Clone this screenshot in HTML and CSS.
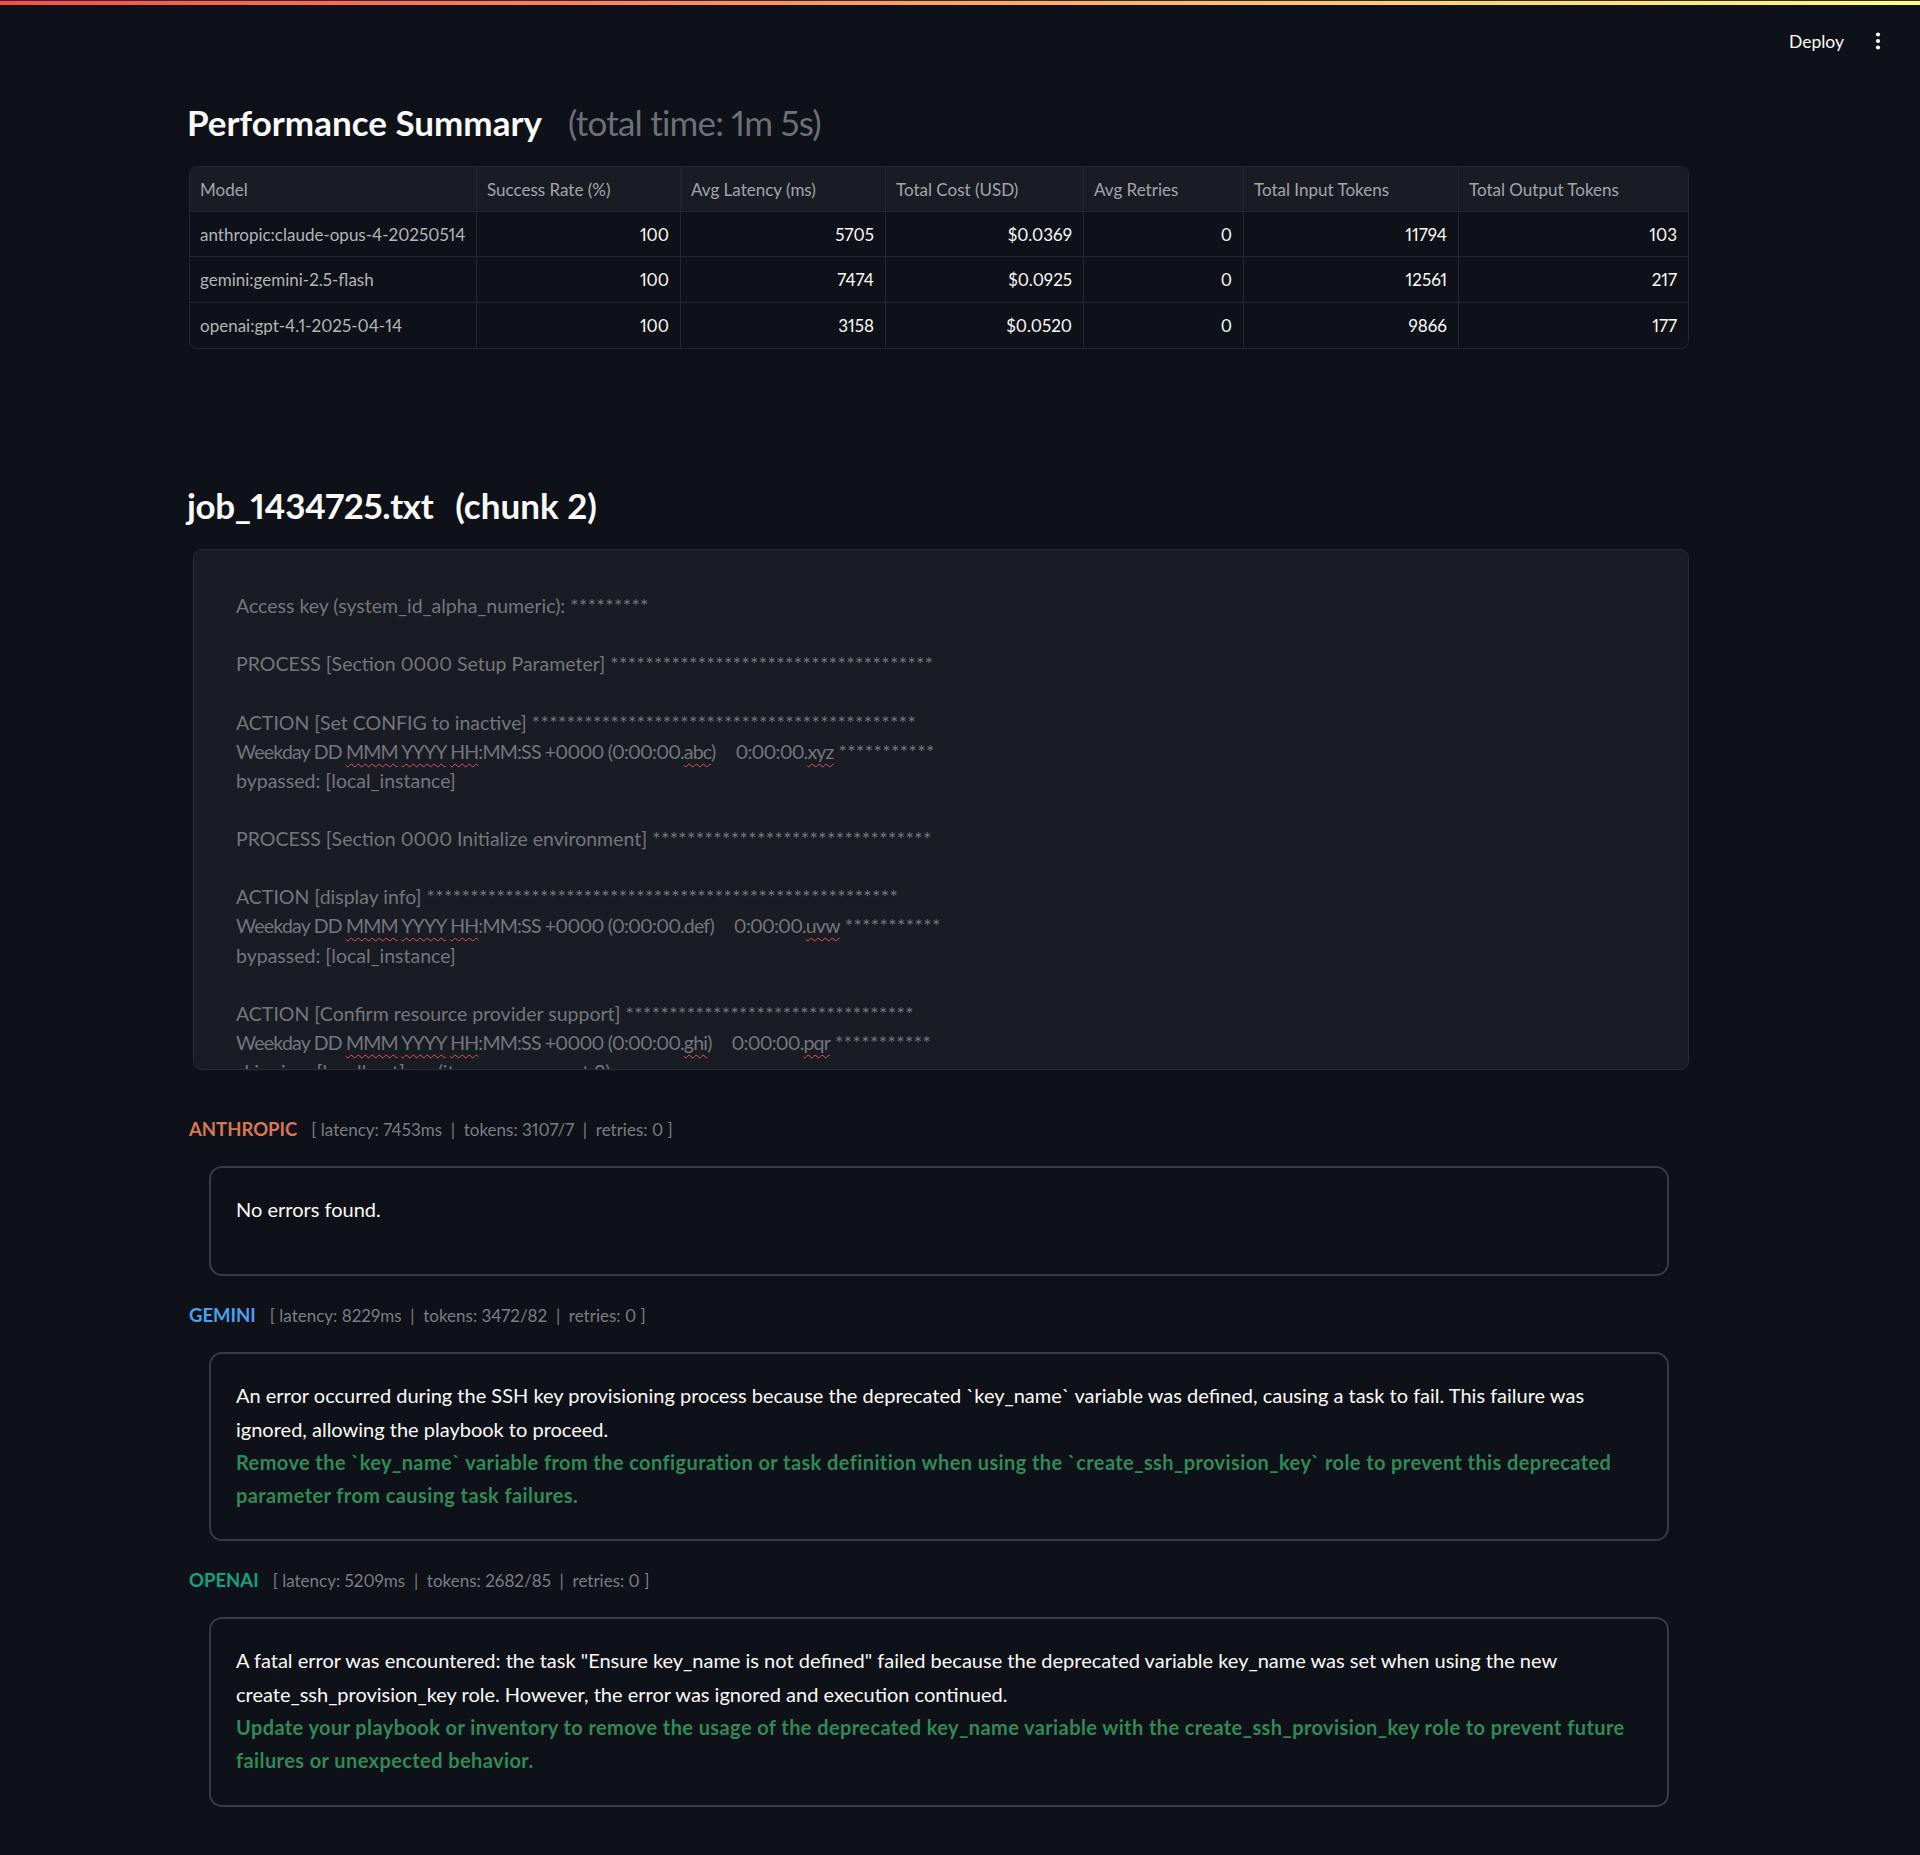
FILE: index.html
```html
<!DOCTYPE html>
<html lang="en">
<head>
<meta charset="utf-8">
<title>Performance Summary</title>
<link rel="stylesheet" href="styles.css">
</head>
<body>
<div class="deco"></div>
<header class="topbar">
  <span class="deploy">Deploy</span>
  <span class="menu"><svg width="6" height="20" viewBox="0 0 6 20"><circle cx="3" cy="3.5" r="2.1"/><circle cx="3" cy="10" r="2.1"/><circle cx="3" cy="16.5" r="2.1"/></svg></span>
</header>
<main class="main">
  <h3 class="title">Performance Summary<span class="muted">(total time: 1m 5s)</span></h3>

  <div class="grid">
    <div class="cell head">Model</div>
    <div class="cell head">Success Rate (%)</div>
    <div class="cell head">Avg Latency (ms)</div>
    <div class="cell head">Total Cost (USD)</div>
    <div class="cell head">Avg Retries</div>
    <div class="cell head">Total Input Tokens</div>
    <div class="cell head">Total Output Tokens</div>

    <div class="cell idx">anthropic:claude-opus-4-20250514</div>
    <div class="cell num">100</div>
    <div class="cell num">5705</div>
    <div class="cell num">$0.0369</div>
    <div class="cell num">0</div>
    <div class="cell num">11794</div>
    <div class="cell num">103</div>

    <div class="cell idx">gemini:gemini-2.5-flash</div>
    <div class="cell num">100</div>
    <div class="cell num">7474</div>
    <div class="cell num">$0.0925</div>
    <div class="cell num">0</div>
    <div class="cell num">12561</div>
    <div class="cell num">217</div>

    <div class="cell idx last">openai:gpt-4.1-2025-04-14</div>
    <div class="cell num last">100</div>
    <div class="cell num last">3158</div>
    <div class="cell num last">$0.0520</div>
    <div class="cell num last">0</div>
    <div class="cell num last">9866</div>
    <div class="cell num last">177</div>
  </div>

  <h3 class="title job"><span class="fname">job_1434725.txt</span><span class="chunk">(chunk 2)</span></h3>

  <div class="textbox">Access key (system_id_alpha_numeric): <span class="st">*********</span>

PROCESS [Section 0000 Setup Parameter] <span class="st">*************************************</span>

ACTION [Set CONFIG to inactive] <span class="st">********************************************</span>
<span class="dt">Weekday DD <span class="sp">MMM</span> <span class="sp">YYYY</span> <span class="sp">HH</span>:MM:SS +0000 (0:00:00.<span class="sp">abc</span>)</span>    <span class="dt">0:00:00.<span class="sp">xyz</span></span> <span class="st">***********</span>
bypassed: [local_instance]

PROCESS [Section 0000 Initialize environment] <span class="st">********************************</span>

ACTION [display info] <span class="st">******************************************************</span>
<span class="dt">Weekday DD <span class="sp">MMM</span> <span class="sp">YYYY</span> <span class="sp">HH</span>:MM:SS +0000 (0:00:00.def)</span>    <span class="dt">0:00:00.<span class="sp">uvw</span></span> <span class="st">***********</span>
bypassed: [local_instance]

ACTION [Confirm resource provider support] <span class="st">*********************************</span>
<span class="dt">Weekday DD <span class="sp">MMM</span> <span class="sp">YYYY</span> <span class="sp">HH</span>:MM:SS +0000 (0:00:00.<span class="sp">ghi</span>)</span>    <span class="dt">0:00:00.<span class="sp">pqr</span></span> <span class="st">***********</span>
skipping: [localhost] =&gt; (item=component 2)
bypassed: [local_instance]</div>

  <div class="model-head"><span class="model anthropic">ANTHROPIC</span><span class="meta">[ latency: 7453ms &nbsp;|&nbsp; tokens: 3107/7 &nbsp;|&nbsp; retries: 0 ]</span></div>
  <div class="card card-empty">
    <p>No errors found.</p>
  </div>

  <div class="model-head"><span class="model gemini">GEMINI</span><span class="meta">[ latency: 8229ms &nbsp;|&nbsp; tokens: 3472/82 &nbsp;|&nbsp; retries: 0 ]</span></div>
  <div class="card">
    <p>An error occurred during the SSH key provisioning process because the deprecated `key_name` variable was defined, causing a task to fail. This failure was<br>ignored, allowing the playbook to proceed.<br><strong class="fix">Remove the `key_name` variable from the configuration or task definition when using the `create_ssh_provision_key` role to prevent this deprecated<br>parameter from causing task failures.</strong></p>
  </div>

  <div class="model-head"><span class="model openai">OPENAI</span><span class="meta">[ latency: 5209ms &nbsp;|&nbsp; tokens: 2682/85 &nbsp;|&nbsp; retries: 0 ]</span></div>
  <div class="card">
    <p>A fatal error was encountered: the task "Ensure key_name is not defined" failed because the deprecated variable key_name was set when using the new<br>create_ssh_provision_key role. However, the error was ignored and execution continued.<br><strong class="fix">Update your playbook or inventory to remove the usage of the deprecated key_name variable with the create_ssh_provision_key role to prevent future<br>failures or unexpected behavior.</strong></p>
  </div>
</main>
</body>
</html>
```

FILE: styles.css
```css
html, body {
  margin: 0;
  padding: 0;
}

body {
  background: #0e1117;
  color: #fafafa;
  font-family: Lato, "Noto Sans", "DejaVu Sans", sans-serif;
  font-variant-numeric: proportional-nums;
  min-height: 1855px;
}

.deco {
  height: 4px;
  border-top: 1px solid #2c2e35;
  background: linear-gradient(90deg, #ff4b4b, #fffd80);
}

.topbar {
  height: 72px;
  display: flex;
  justify-content: flex-end;
  align-items: center;
  gap: 31px;
  padding-right: 39px;
}

.deploy {
  font-size: 17.5px;
  color: #fafafa;
}

.menu {
  display: flex;
  align-items: center;
}

.menu svg {
  fill: #fafafa;
}

.main {
  margin-left: 189px;
  width: 1500px;
}

.title {
  margin: 23px 0 0 -2px;
  font-size: 35px;
  line-height: 44px;
  font-weight: 700;
  color: #fafafa;
  white-space: nowrap;
}

.title .muted {
  margin-left: 26px;
  color: #6c6f77;
  font-weight: 400;
  letter-spacing: -0.8px;
}

.title .fname {
  letter-spacing: -0.4px;
}

.title .chunk {
  margin-left: 22px;
}

.job {
  margin-top: 134px;
}

/* data grid */
.grid {
  margin-top: 22px;
  display: grid;
  grid-template-columns: 286px 204px 205px 198px 160px 215px 230px;
  grid-template-rows: 45px 45px 46px 45px;
  border: 1px solid #25272e;
  border-radius: 8px;
  overflow: hidden;
  font-size: 17px;
}

.cell {
  box-sizing: border-box;
  display: flex;
  align-items: center;
  padding: 0 11px 0 10px;
  border-left: 1px solid #25272e;
  border-bottom: 1px solid #25272e;
  white-space: nowrap;
  overflow: hidden;
}

.cell:nth-child(7n+1) {
  border-left: none;
}

.cell.last {
  border-bottom: none;
}

.head {
  background: #1a1c24;
  color: #a3a5ab;
}

.idx {
  color: #b3b5ba;
}

.num {
  justify-content: flex-end;
  color: #fafafa;
}

/* text area */
.textbox {
  box-sizing: border-box;
  margin: 22px 0 0 4px;
  height: 521px;
  padding: 41px 42px 0;
  background: #1a1c24;
  border: 1px solid #2a2c34;
  border-radius: 9px;
  overflow: hidden;
  white-space: pre;
  font-size: 19.5px;
  line-height: 29.12px;
  color: #74767c;
}

.textbox .st {
  letter-spacing: 0.45px;
}

.textbox .dt {
  letter-spacing: -0.8px;
}

.sp {
  text-decoration: underline wavy #e5535a;
  text-decoration-thickness: 1px;
  text-underline-offset: 4px;
}

/* model results */
.model-head {
  display: flex;
  align-items: baseline;
  gap: 14px;
  line-height: 30px;
  margin-top: 24px;
}

.textbox + .model-head {
  margin-top: 44px;
}

.card + .model-head {
  margin-top: 24px;
}

.model {
  font-size: 18.5px;
  font-weight: 700;
}

.anthropic { color: #d97757; }
.gemini { color: #4b9ff0; }
.openai { color: #10a37f; }

.meta {
  font-size: 17px;
  color: #7b7d84;
}

.card {
  margin: 21px 20px 0;
  padding: 25px 25px 27px;
  border: 2px solid #393b42;
  border-radius: 13px;
  font-size: 20px;
  line-height: 33.3px;
}

.card-empty {
  padding-bottom: 48px;
}

.card p {
  margin: 0;
  white-space: nowrap;
}

.fix {
  color: #2e8b57;
  font-weight: 700;
  letter-spacing: 0.4px;
}
```
